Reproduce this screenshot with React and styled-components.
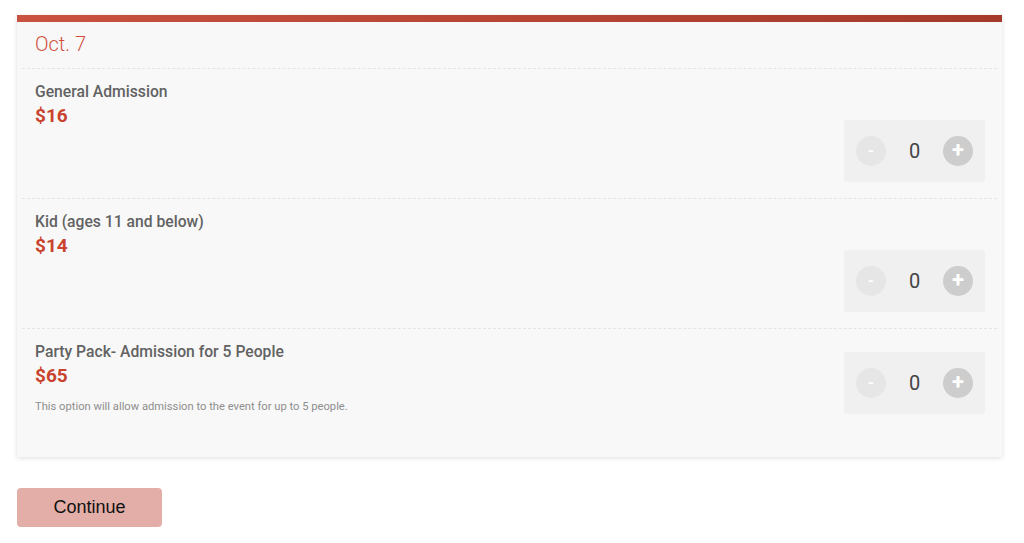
import React from "react";
import styled, { createGlobalStyle } from "styled-components";

const Global = createGlobalStyle`
  html, body { margin: 0; padding: 0; background: #ffffff; }
  body { font-family: Roboto, "Liberation Sans", Arial, sans-serif; }
  * { box-sizing: border-box; }
`;

const Page = styled.div`
  padding: 15px 22px 0 17px;
`;

const Card = styled.div`
  background: #f8f8f8;
  border-top: 7px solid #bf4635;
  border-image: linear-gradient(90deg, #c9513f, #a53a2b) 1;
  border-top-style: solid;
  box-shadow: 0 1px 5px rgba(0, 0, 0, 0.13);
`;

const Header = styled.div`
  height: 47px;
  display: flex;
  align-items: center;
  margin: 0 5px;
  padding: 0 18px 0 13px;
  border-bottom: 1px dashed #e4e4e4;
`;

const DateText = styled.div`
  font-size: 20px;
  font-weight: 300;
  color: #d0503e;
  padding-bottom: 2px;
`;

const Row = styled.div`
  display: flex;
  justify-content: space-between;
  align-items: flex-start;
  margin: 0 5px;
  padding: 14px 12px ${(p) => p.$bottom}px 13px;
  border-bottom: ${(p) => (p.$last ? "none" : "1px dashed #e4e4e4")};
`;

const Info = styled.div`
  display: flex;
  flex-direction: column;
`;

const Title = styled.div`
  font-size: 15.7px;
  line-height: 18px;
  font-weight: 500;
  color: #626262;
`;

const Price = styled.div`
  margin-top: 4px;
  font-size: 19px;
  line-height: 22px;
  font-weight: 700;
  color: #c9432f;
`;

const Desc = styled.div`
  margin-top: 13px;
  font-size: 11.2px;
  line-height: 14px;
  color: #8e8e8e;
`;

const Stepper = styled.div`
  margin-top: ${(p) => p.$offset}px;
  width: 141px;
  height: 62px;
  background: #f0f0f0;
  border-radius: 2px;
  display: flex;
  align-items: center;
  padding: 0 12px;
`;

const Circle = styled.div`
  width: 30px;
  height: 30px;
  border-radius: 50%;
  background: ${(p) => (p.$active ? "#cdcdcd" : "#e6e6e6")};
  color: #ffffff;
  display: flex;
  align-items: center;
  justify-content: center;
  font-size: ${(p) => (p.$active ? "22px" : "17px")};
  font-weight: ${(p) => (p.$active ? 700 : 500)};
  line-height: 1;
  padding-bottom: 2px;
`;

const Value = styled.div`
  width: 57px;
  text-align: center;
  font-size: 20px;
  color: #444;
`;

const Button = styled.button`
  margin-top: 31px;
  width: 145px;
  height: 39px;
  border: none;
  border-radius: 4px;
  background: #e3aea8;
  color: #111;
  font-family: "Liberation Sans", Arial, sans-serif;
  font-size: 18px;
  padding: 0;
`;

const tickets = [
  { title: "General Admission", price: "$16", offset: 37, bottom: 16 },
  { title: "Kid (ages 11 and below)", price: "$14", offset: 37, bottom: 16 },
  {
    title: "Party Pack- Admission for 5 People",
    price: "$65",
    desc: "This option will allow admission to the event for up to 5 people.",
    offset: 9,
    bottom: 43,
  },
];

export default function App() {
  return (
    <Page>
      <Global />
      <Card>
        <Header>
          <DateText>Oct. 7</DateText>
        </Header>
        {tickets.map((t, i) => (
          <Row key={t.title} $bottom={t.bottom} $last={i === tickets.length - 1}>
            <Info>
              <Title>{t.title}</Title>
              <Price>{t.price}</Price>
              {t.desc && <Desc>{t.desc}</Desc>}
            </Info>
            <Stepper $offset={t.offset}>
              <Circle>-</Circle>
              <Value>0</Value>
              <Circle $active>+</Circle>
            </Stepper>
          </Row>
        ))}
      </Card>
      <Button>Continue</Button>
    </Page>
  );
}
